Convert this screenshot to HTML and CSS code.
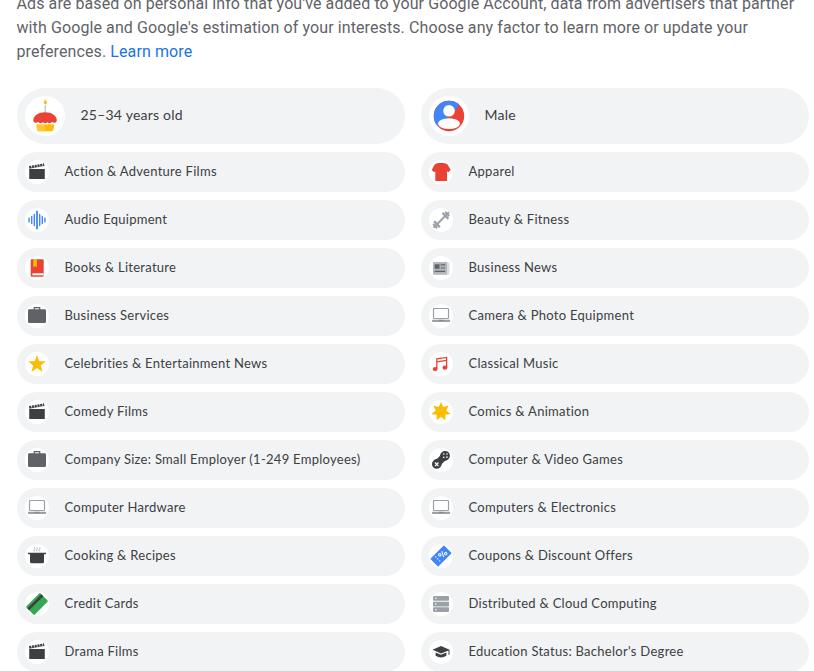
FILE: index.html
```
<!DOCTYPE html>
<html lang="en">
<head>
<meta charset="utf-8">
<title>Ad personalization</title>
<link rel="stylesheet" href="styles.css">
</head>
<body>
<svg class="sprite" aria-hidden="true">
  <symbol id="film" viewBox="0 0 24 24"><path fill="#3c4043" d="M4.200 9h15.600v10H4.200z"/><path fill="none" stroke="#3c4043" stroke-width="2.200" stroke-dasharray="2.100 .7" d="M4.200 7.200 19.200 4.400"/><path stroke="#3c4043" stroke-width=".7" d="M4.300 8.300 19.500 5.500"/></symbol>
  <symbol id="shirt" viewBox="0 0 24 24"><path fill="#ea4335" d="M8 3.200h8l2.600 1.300L21.700 10l-2.500 2.200-1.200-1V21H6.300v-9.800l-1.200 1L2.700 10l3-5.500z"/><path fill="#d63a2e" d="M9 3.100h6l-1 1h-4z"/></symbol>
  <symbol id="audio" viewBox="0 0 24 24"><path stroke="#4285f4" stroke-width="1.800" stroke-linecap="round" d="M12 3.500v17"/><path stroke="#4285f4" stroke-width="1.400" stroke-linecap="round" d="M9.300 6.500v11M14.700 6.500v11M6.700 8.500v7M17.300 8.500v7M4.100 10.300v3.600M19.900 10.300v3.600"/></symbol>
  <symbol id="book" viewBox="0 0 24 24"><rect x="5.700" y="3.200" width="13" height="17.500" rx="1" fill="#ea4335"/><path fill="#fff" d="M7.400 17.300h11.300v2H7.400z"/><path fill="#fbbc04" d="M8.300 3.200h3.600v8.300l-1.800-1.600-1.800 1.600z"/></symbol>
  <symbol id="case" viewBox="0 0 24 24"><rect x="3" y="5.300" width="18" height="13.600" rx="1.200" fill="#5f6368"/><path fill="none" stroke="#5f6368" stroke-width="1.300" d="M9.300 6V3.700h5.400V6"/></symbol>
  <symbol id="star" viewBox="0 0 24 24"><path fill="#fbbc04" d="m12 3 2.300 6.300h6.600l-5.200 4.100 1.900 6.600-5.600-3.900L6.400 20l1.900-6.600-5.200-4.100h6.600z"/></symbol>
  <symbol id="laptop" viewBox="0 0 24 24"><rect x="4.500" y="4.500" width="15" height="10" rx=".8" fill="#fff" stroke="#9aa0a6" stroke-width="1.200"/><path fill="#9aa0a6" d="M3 15.800h18.200V17q0 1-1 1H4q-1 0-1-1z"/><path fill="#80868b" d="M9.500 15.800h5.200v1H9.500z"/></symbol>
  <symbol id="pot" viewBox="0 0 24 24"><path fill="#3c4043" d="M3 8.800h18v1.400h-2v7.600q0 1.500-1.500 1.500h-11Q5 19.300 5 17.800v-7.600H3z"/><path fill="none" stroke="#9aa0a6" stroke-width=".8" d="M9.400 7.400q-1-1 0-2t0-2M12 7.400q-1-1 0-2t0-2M14.600 7.400q-1-1 0-2t0-2"/></symbol>
  <symbol id="card" viewBox="0 0 24 24"><g transform="rotate(-45 12 12)"><rect x="2" y="6.100" width="20" height="11.800" rx="1" fill="#34a853"/><path fill="#3c4043" d="M2 8.200h20v2.700H2z"/></g></symbol>
  <symbol id="dumbbell" viewBox="0 0 24 24"><g transform="rotate(-45 12.200 12)" fill="#9aa0a6"><path d="M1.300 11h22v2h-22z"/><rect x="2.700" y="9" width="2" height="6" rx=".6"/><rect x="5.100" y="7.800" width="2.300" height="8.400" rx=".6"/><rect x="17" y="7.800" width="2.300" height="8.400" rx=".6"/><rect x="19.700" y="9" width="2" height="6" rx=".6"/></g></symbol>
  <symbol id="news" viewBox="0 0 24 24"><path fill="#dadce0" d="M17 6.400h3.500v11.400q0 1-1 1H17z"/><path fill="#b4b8bc" d="M4 6h14v12.700H5q-1 0-1-1z"/><path fill="#5f6368" d="M5.700 8.300h4.800v4.500H5.700zM11.700 8.300h4.500v1.200h-4.500zM11.700 11.400h4.500v1.200h-4.500zM5.700 14.700h10.500v1.200H5.700z"/></symbol>
  <symbol id="music" viewBox="0 0 24 24"><g fill="#ea4335"><ellipse cx="6.100" cy="17.100" rx="2.400" ry="2.100"/><ellipse cx="15.900" cy="15.700" rx="2.400" ry="2.100"/></g><path fill="none" stroke="#ea4335" stroke-width="1.300" d="M7.800 17.200V6.900l9.800-1.500v10.400M7.800 9.900l9.800-1.500"/></symbol>
  <symbol id="burst" viewBox="0 0 24 24"><path fill="#fbbc04" d="m12 2.100 2.300 5 5.300-1.600-2.300 5 4.300 3.400-5.200.9-.1 5.500-4.300-3.500-4.300 3.500-.1-5.500-5.200-.9 4.300-3.400-2.300-5 5.300 1.600z"/></symbol>
  <symbol id="game" viewBox="0 0 24 24"><g transform="rotate(-45 12 12)"><path fill="#3c4043" d="M6 7.200q2.500 0 4 1.200h4q1.500-1.200 4-1.200a4.700 4.700 0 0 1 0 9.400q-2.500 0-4-1.200h-4q-1.500 1.200-4 1.200a4.700 4.700 0 0 1 0-9.400z"/><g fill="#fff"><circle cx="18.200" cy="9.700" r=".8"/><circle cx="18.200" cy="14.200" r=".8"/><circle cx="15.900" cy="12" r=".8"/><circle cx="20.500" cy="12" r=".8"/></g><path stroke="#fff" stroke-width="1.200" d="M3.400 12h5M5.900 9.500v5"/></g></symbol>
  <symbol id="coupon" viewBox="0 0 24 24"><g transform="rotate(-45 12 12)"><rect x="2.300" y="6.400" width="19.400" height="11.200" rx="1" fill="#4285f4"/><g fill="none" stroke="#fff" stroke-width="1"><circle cx="12" cy="10.300" r="1.200"/><circle cx="17" cy="13.700" r="1.200"/><path d="m13 14.700 3-5.500"/></g><path stroke="#fff" stroke-width="1.100" stroke-dasharray="1.300 1.500" d="M7.700 8.300v8"/></g></symbol>
  <symbol id="server" viewBox="0 0 24 24"><g fill="#9aa0a6"><rect x="4" y="4" width="16" height="4.700" rx="1"/><rect x="4" y="9.700" width="16" height="4.700" rx="1"/><rect x="4" y="15.300" width="16" height="4.700" rx="1"/></g><g fill="#fff"><circle cx="6.800" cy="6.300" r=".8"/><circle cx="6.800" cy="12" r=".8"/><circle cx="6.800" cy="17.700" r=".8"/></g></symbol>
  <symbol id="grad" viewBox="0 0 24 24"><path fill="#3c4043" d="m12 6 8.500 3.700v5h-1v-4.300L12 13.500 3.500 9.700zM6.600 12.500l5.400 2.300 5.400-2.300v3.300q-5.400 3.400-10.800 0z"/></symbol>
  <symbol id="cake" viewBox="0 0 40 40"><path fill="#fdd663" d="M20.300 3q2.500 3.300 1.400 4.800-1.400 1-2.800 0Q17.800 6.300 20.300 3z"/><path fill="#f9ab00" d="M20.300 4.600q1.400 2.200.7 3.200h-1.400q-.7-1 .7-3.200z"/><path fill="#bdc1c6" d="M19.600 9.300h1.300v8h-1.300z"/><path fill="#fbbc04" d="M10.900 26.500h18.600l-1.200 7.500q-.2 1.300-1.500 1.300H13.600q-1.300 0-1.500-1.300z"/><path fill="#fdd663" opacity=".5" d="M10.900 26.500h9v8.800h-6.300q-1.300 0-1.500-1.300z"/><path fill="#fff" d="M10 25.500h20.400v2.400q-1.600 1.400-3.400 0-1.700 1.400-3.400 0-1.700 1.400-3.400 0-1.700 1.400-3.400 0-1.700 1.400-3.400 0-1.700 1.400-3.400 0z"/><path fill="#ea4335" d="M8.300 24.300c0-4.700 5.300-8 11.800-8s11.700 3.300 11.700 8c0 2.600-3 3.200-4.700 1.800-1.300 1.400-3.300 1.400-4.600.1-1.300 1.300-3.400 1.300-4.700 0-1.300 1.300-3.400 1.300-4.700-.1-1.800 1.400-4.800.8-4.800-1.800z"/></symbol>
  <symbol id="person" viewBox="0 0 40 40"><circle cx="20" cy="20" r="15.200" fill="#ea4335"/><path fill="#4285f4" d="M9.200 30.800A15.200 15.200 0 0 1 30.800 9.200z"/><g fill="#fff"><circle cx="20" cy="14.800" r="5.800"/><ellipse cx="20" cy="27.600" rx="11" ry="5.400"/></g></symbol>
</svg>
<main class="page">
  <p class="intro">Ads are based on personal info that you've added to your Google Account, data from advertisers that partner with Google and Google's estimation of your interests. Choose any factor to learn more or update your preferences. <a href="#">Learn more</a></p>
  <ul class="factors">
    <li class="factor factor-large"><span class="icon"><svg><use href="#cake"/></svg></span><span class="label">25–34 years old</span></li>
    <li class="factor factor-large"><span class="icon"><svg><use href="#person"/></svg></span><span class="label">Male</span></li>
    <li class="factor"><span class="icon"><svg><use href="#film"/></svg></span><span class="label">Action &amp; Adventure Films</span></li>
    <li class="factor"><span class="icon"><svg><use href="#shirt"/></svg></span><span class="label">Apparel</span></li>
    <li class="factor"><span class="icon"><svg><use href="#audio"/></svg></span><span class="label">Audio Equipment</span></li>
    <li class="factor"><span class="icon"><svg><use href="#dumbbell"/></svg></span><span class="label">Beauty &amp; Fitness</span></li>
    <li class="factor"><span class="icon"><svg><use href="#book"/></svg></span><span class="label">Books &amp; Literature</span></li>
    <li class="factor"><span class="icon"><svg><use href="#news"/></svg></span><span class="label">Business News</span></li>
    <li class="factor"><span class="icon"><svg><use href="#case"/></svg></span><span class="label">Business Services</span></li>
    <li class="factor"><span class="icon"><svg><use href="#laptop"/></svg></span><span class="label">Camera &amp; Photo Equipment</span></li>
    <li class="factor"><span class="icon"><svg><use href="#star"/></svg></span><span class="label">Celebrities &amp; Entertainment News</span></li>
    <li class="factor"><span class="icon"><svg><use href="#music"/></svg></span><span class="label">Classical Music</span></li>
    <li class="factor"><span class="icon"><svg><use href="#film"/></svg></span><span class="label">Comedy Films</span></li>
    <li class="factor"><span class="icon"><svg><use href="#burst"/></svg></span><span class="label">Comics &amp; Animation</span></li>
    <li class="factor"><span class="icon"><svg><use href="#case"/></svg></span><span class="label">Company Size: Small Employer (1-249 Employees)</span></li>
    <li class="factor"><span class="icon"><svg><use href="#game"/></svg></span><span class="label">Computer &amp; Video Games</span></li>
    <li class="factor"><span class="icon"><svg><use href="#laptop"/></svg></span><span class="label">Computer Hardware</span></li>
    <li class="factor"><span class="icon"><svg><use href="#laptop"/></svg></span><span class="label">Computers &amp; Electronics</span></li>
    <li class="factor"><span class="icon"><svg><use href="#pot"/></svg></span><span class="label">Cooking &amp; Recipes</span></li>
    <li class="factor"><span class="icon"><svg><use href="#coupon"/></svg></span><span class="label">Coupons &amp; Discount Offers</span></li>
    <li class="factor"><span class="icon"><svg><use href="#card"/></svg></span><span class="label">Credit Cards</span></li>
    <li class="factor"><span class="icon"><svg><use href="#server"/></svg></span><span class="label">Distributed &amp; Cloud Computing</span></li>
    <li class="factor"><span class="icon"><svg><use href="#film"/></svg></span><span class="label">Drama Films</span></li>
    <li class="factor"><span class="icon"><svg><use href="#grad"/></svg></span><span class="label">Education Status: Bachelor's Degree</span></li>
  </ul>
</main>
</body>
</html>
```
FILE: styles.css
```
* { box-sizing: border-box; }
html, body { height: 100%; }
body {
  margin: 0;
  overflow: hidden;
  background: #fff;
  color: #3c4043;
}
.sprite { display: none; }
.page { padding: 0 5px 0 17px; }
.intro {
  margin: -8px 0 24px -0.5px;
  font: 16px/24px Roboto, sans-serif;
  letter-spacing: 0.1px;
  color: #5f6368;
}
.intro a { color: #1a73e8; text-decoration: none; }
.factors {
  display: grid;
  grid-template-columns: 1fr 1fr;
  gap: 8px 16px;
  margin: 0;
  padding: 0;
  list-style: none;
}
.factor {
  display: flex;
  align-items: center;
  gap: 15.5px;
  height: 40px;
  padding: 0 8px;
  border-radius: 28px;
  background: #f1f3f4;
  font: 13px/20px "Google Sans", Lato, sans-serif;
  letter-spacing: 0.28px;
  white-space: nowrap;
}
.factor-large { height: 56px; font-size: 14px; letter-spacing: 0.22px; }
.label { padding-bottom: 2px; }
.icon {
  flex: none;
  width: 24px;
  height: 24px;
  border-radius: 50%;
  background: #fff;
}
.factor-large .icon { width: 40px; height: 40px; }
.icon svg { display: block; width: 100%; height: 100%; }
```
